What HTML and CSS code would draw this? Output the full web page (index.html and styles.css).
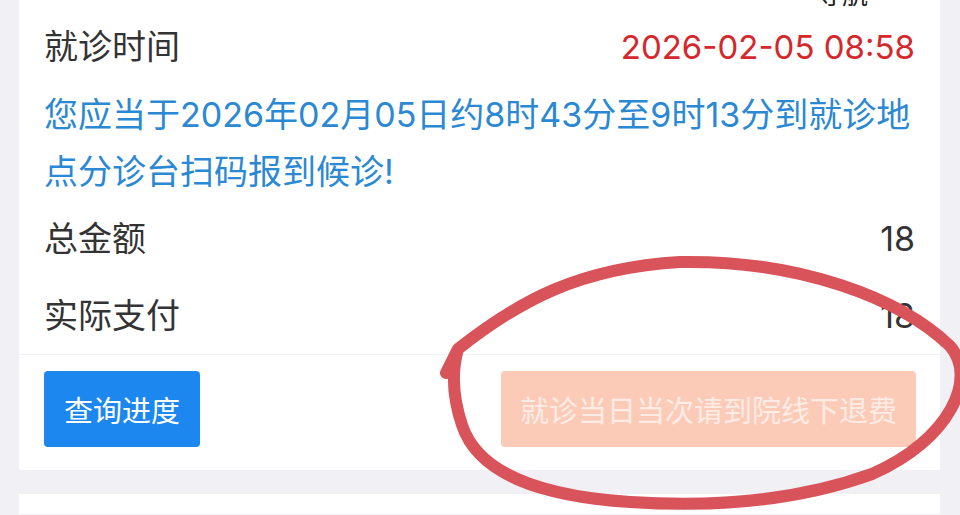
FILE: index.html
```html
<!DOCTYPE html>
<html lang="zh-CN">
<head>
<meta charset="utf-8">
<title>预约详情</title>
<link rel="stylesheet" href="styles.css">
</head>
<body>
<div class="page">
  <section class="card">
    <div class="row row-nav"><span class="nav-link">导航</span></div>
    <div class="row row-time">
      <span class="label">就诊时间</span>
      <span class="value value-red">2026-02-05 08:58</span>
    </div>
    <p class="notice">您应当于2026年02月05日约8时43分至9时13分到就诊地<br>点分诊台扫码报到候诊!</p>
    <div class="row row-amount">
      <span class="label">总金额</span>
      <span class="value">18</span>
    </div>
    <div class="row row-paid">
      <span class="label">实际支付</span>
      <span class="value">18</span>
    </div>
    <div class="actions">
      <button class="btn btn-primary">查询进度</button>
      <button class="btn btn-disabled">就诊当日当次请到院线下退费</button>
    </div>
  </section>
  <section class="card card-next"></section>
</div>
<svg class="annotation" width="960" height="515" viewBox="0 0 960 515" aria-hidden="true">
  <path d="M446 373 L458 349 C 520 300 580 268 680 262 C 800 260 900 298 950 346 C 978 378 950 440 872 474 C 800 500 720 508 630 502 C 540 496 478 474 462 425 C 452 395 452 370 458 349" fill="none" stroke="#d9535a" stroke-width="12" stroke-linecap="round" stroke-linejoin="round"/>
</svg>
</body>
</html>
```

FILE: styles.css
```css
* { box-sizing: border-box; }
html, body {
  margin: 0;
  padding: 0;
  height: 515px;
  overflow: hidden;
  background: #f0f0f5;
  font-family: Inter, "Noto Sans CJK SC", "Noto Sans", sans-serif;
}
.page {
  padding: 0 20px 0 19px;
}
.card {
  background: #ffffff;
  margin-top: -36px;
}
.card-next {
  margin-top: 24px;
  height: 20px;
}
.row {
  display: flex;
  justify-content: space-between;
  align-items: center;
  padding: 0 25px;
  color: #333333;
  font-size: 34px;
}
.row-nav {
  height: 44px;
  align-items: flex-end;
  justify-content: flex-end;
  padding-right: 72px;
}
.nav-link {
  font-size: 26px;
  line-height: 26px;
  color: #222;
}
.row-time { height: 78px; }
.row-amount { height: 77px; }
.row-paid { height: 78px; border-bottom: 1px solid #f2f2f4; }
.label { line-height: 1; }
.value { line-height: 1; }
.value-red { color: #d4282c; font-size: 33px; }
.notice {
  margin: 0;
  padding: 0 25px;
  font-size: 34px;
  line-height: 57px;
  color: #2b88d3;
  white-space: nowrap;
}
.actions {
  display: flex;
  justify-content: space-between;
  padding: 16px 24px 23px 25px;
}
.btn {
  border: none;
  height: 76px;
  border-radius: 4px;
  font-family: inherit;
  color: #ffffff;
  padding: 0;
}
.btn-primary {
  width: 156px;
  background: #1c87ef;
  font-size: 29px;
}
.btn-disabled {
  width: 415px;
  background: #fccbb8;
  color: #fdece5;
  font-size: 29px;
}
.annotation {
  position: absolute;
  left: 0;
  top: 0;
  pointer-events: none;
}
```
